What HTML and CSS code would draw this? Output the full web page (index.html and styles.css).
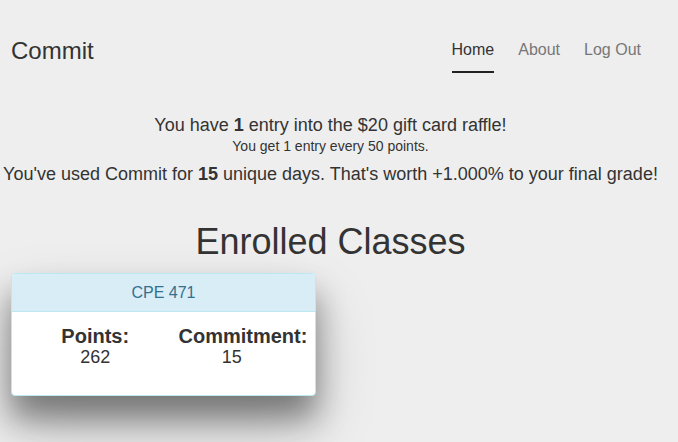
FILE: index.html
```html
<!DOCTYPE html>
<html>
<head>
<meta charset="utf-8">
<title>Commit</title>
<link rel="stylesheet" href="styles.css">
</head>
<body>
<header class="navbar">
  <div class="brand">Commit</div>
  <ul class="nav">
    <li><a class="active" href="#">Home</a></li>
    <li><a href="#">About</a></li>
    <li><a href="#">Log Out</a></li>
  </ul>
</header>
<section class="info">
  <p class="line-lg">You have <b>1</b> entry into the $20 gift card raffle!</p>
  <p class="line-sm">You get 1 entry every 50 points.</p>
  <p class="line-lg line-days">You've used Commit for <b>15</b> unique days. That's worth +1.000% to your final grade!</p>
</section>
<h1 class="title">Enrolled Classes</h1>
<div class="cards">
  <div class="panel">
    <div class="panel-heading">CPE 471</div>
    <div class="panel-body">
      <div class="col">
        <div class="label">Points:</div>
        <div class="value">262</div>
      </div>
      <div class="col">
        <div class="label">Commitment:</div>
        <div class="value">15</div>
      </div>
    </div>
  </div>
</div>
</body>
</html>
```
FILE: styles.css
```css
html {
  background: #eeeeee;
  overflow: hidden;
}
html, body {
  margin: 0;
  padding: 0;
}
body {
  width: 661px;
  background: #eeeeee;
  color: #333333;
  font-family: "Liberation Sans", Arial, sans-serif;
  font-size: 16px;
  height: 442px;
}
.navbar {
  display: flex;
  justify-content: space-between;
  align-items: flex-start;
  padding: 37px 20px 0 11px;
}
.brand {
  font-size: 24px;
  line-height: 28px;
  color: #333;
}
.nav {
  display: flex;
  gap: 24px;
  list-style: none;
  margin: 0;
  padding: 3px 0 0 0;
}
.nav a {
  display: block;
  font-size: 16px;
  line-height: 20px;
  color: #777;
  text-decoration: none;
  padding-bottom: 11px;
  border-bottom: 2px solid transparent;
}
.nav a.active {
  color: #333;
  border-bottom-color: #222;
}
.info {
  text-align: center;
  margin-top: 41px;
}
.info p {
  margin: 0;
}
.line-lg {
  font-size: 18px;
  line-height: 22px;
}
.line-sm {
  font-size: 14px;
  line-height: 17px;
  margin-top: 2px !important;
}
.line-days {
  margin-top: 8px !important;
  white-space: nowrap;
}
.title {
  text-align: center;
  font-size: 36px;
  font-weight: normal;
  line-height: 40px;
  margin: 37px 0 0 0;
}
.cards {
  padding: 11px 0 0 11px;
}
.panel {
  width: 303px;
  background: #fff;
  border: 1px solid #bce8f1;
  border-radius: 4px;
  box-shadow: 0 22px 30px rgba(0,0,0,0.38), 0 30px 60px rgba(0,0,0,0.22);
}
.panel-heading {
  background: #d9edf7;
  color: #31708f;
  border-bottom: 1px solid #bce8f1;
  border-radius: 3px 3px 0 0;
  text-align: center;
  font-size: 16px;
  line-height: 17px;
  padding: 10px 15px;
}
.panel-body {
  display: grid;
  grid-template-columns: 1fr 1fr;
  padding: 13px 15px 28px;
}
.col {
  padding: 0 15px;
  text-align: center;
  min-width: 0;
}
.label {
  font-size: 20px;
  font-weight: bold;
  line-height: 22px;
  white-space: nowrap;
}
.value {
  font-size: 18px;
  line-height: 20px;
}
```
